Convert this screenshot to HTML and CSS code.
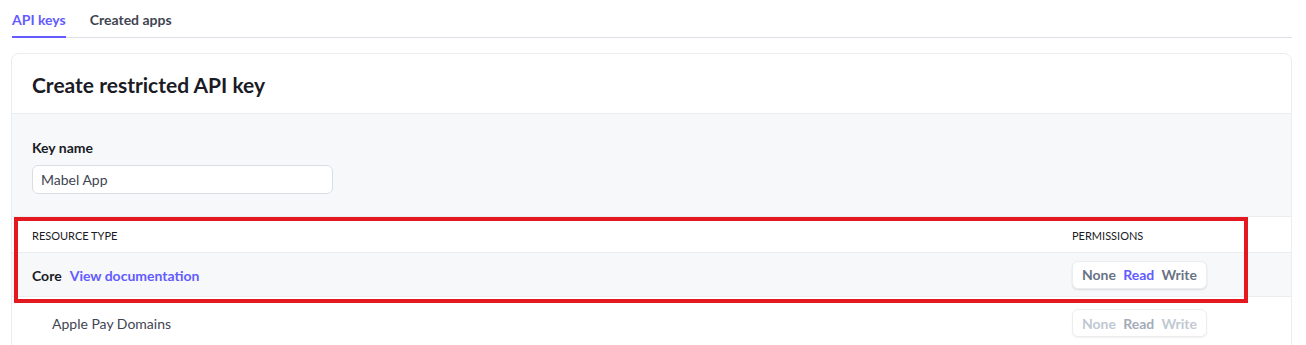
FILE: index.html
```html
<!DOCTYPE html>
<html>
<head>
<meta charset="utf-8">
<link rel="stylesheet" href="styles.css">
</head>
<body>
<div class="page">
  <nav class="tabs">
    <a class="tab active">API keys</a>
    <a class="tab">Created apps</a>
  </nav>
  <section class="card">
    <header class="card-head">
      <h1>Create restricted API key</h1>
    </header>
    <div class="card-body">
      <label class="field-label">Key name</label>
      <div class="input">Mabel App</div>
    </div>
    <div class="table">
      <div class="row head">
        <div class="cell-main">RESOURCE TYPE</div>
        <div class="cell-perm">PERMISSIONS</div>
      </div>
      <div class="row group">
        <div class="cell-main"><span class="group-name">Core</span><a class="doc-link">View documentation</a></div>
        <div class="cell-perm">
          <div class="seg"><span>None</span><span class="on">Read</span><span>Write</span></div>
        </div>
      </div>
      <div class="row item">
        <div class="cell-main sub">Apple Pay Domains</div>
        <div class="cell-perm">
          <div class="seg disabled"><span>None</span><span class="on">Read</span><span>Write</span></div>
        </div>
      </div>
    </div>
  </section>
  <div class="annot"></div>
</div>
</body>
</html>
```

FILE: styles.css
```css
* { box-sizing: border-box; }
html, body { margin: 0; padding: 0; background: #fff; }
body {
  font-family: "Lato", "Segoe UI", sans-serif;
  color: #1a1b25;
  width: 1306px;
  height: 345px;
  overflow: hidden;
}
.page {
  position: relative;
  padding: 0 14px 0 11px;
}
.tabs {
  display: flex;
  gap: 24px;
  height: 38px;
  margin-left: 1px;
  border-bottom: 1px solid #dcdfe6;
  align-items: stretch;
}
.tab {
  font-size: 14px;
  font-weight: 700;
  color: #414552;
  padding-top: 10px;
  line-height: 19px;
  border-bottom: 2px solid transparent;
  margin-bottom: -1px;
}
.tab.active {
  color: #635bff;
  border-bottom-color: #635bff;
}
.card {
  margin-top: 15px;
  border: 1px solid #ebeef1;
  border-radius: 8px;
  overflow: hidden;
  background: #fff;
}
.card-head {
  height: 60px;
  display: flex;
  align-items: center;
  padding: 0 20px;
  border-bottom: 1px solid #ebeef1;
}
.card-head h1 {
  margin: 0;
  font-size: 21px;
  font-weight: 700;
  color: #1a1b25;
  padding-top: 1px;
}
.card-body {
  background: #f6f8fa;
  padding: 24px 20px 22px;
}
.field-label {
  display: block;
  font-size: 14px;
  font-weight: 700;
  line-height: 20px;
  color: #1a1b25;
}
.input {
  margin-top: 7px;
  width: 301px;
  height: 29px;
  border: 1px solid #d8dee4;
  border-radius: 6px;
  background: #fff;
  font-size: 14px;
  color: #414552;
  padding: 0 8px;
  line-height: 27px;
}
.row {
  display: flex;
  align-items: center;
  border-top: 1px solid #ebeef1;
}
.row.head {
  height: 36px;
  background: #fff;
  font-size: 11px;
  color: #1a1b25;
  padding-top: 2px;
}
.row.group {
  height: 44px;
  background: #f6f8fa;
}
.row.item {
  height: 56px;
  background: #fff;
  align-items: flex-start;
  padding-top: 12px;
}
.cell-main {
  flex: 1;
  padding-left: 20px;
  display: flex;
  align-items: center;
  gap: 8px;
}
.row.group .cell-main { padding-top: 2px; }
.cell-main.sub {
  padding-left: 40px;
  font-size: 14px;
  color: #414552;
  padding-top: 6px;
}
.cell-perm {
  width: 219px;
  flex: none;
}
.group-name {
  font-size: 14px;
  font-weight: 700;
  color: #1a1b25;
}
.doc-link {
  font-size: 14px;
  font-weight: 700;
  color: #635bff;
}
.seg {
  display: inline-flex;
  justify-content: space-between;
  height: 28px;
  width: 135px;
  padding: 0 9px;
  align-items: center;
  border: 1px solid #ebeef1;
  border-radius: 6px;
  background: #fff;
  box-shadow: 0 1px 2px rgba(0, 0, 0, 0.12);
  font-size: 14px;
  font-weight: 700;
  color: #687385;
}
.seg .on { color: #635bff; }
.seg.disabled { color: #c0c8d2; box-shadow: 0 1px 2px rgba(0, 0, 0, 0.06); }
.seg.disabled .on { color: #a3acb9; }
.annot {
  position: absolute;
  left: 14px;
  top: 217px;
  width: 1234px;
  height: 86px;
  border: 4px solid #e3191f;
  pointer-events: none;
}
```
